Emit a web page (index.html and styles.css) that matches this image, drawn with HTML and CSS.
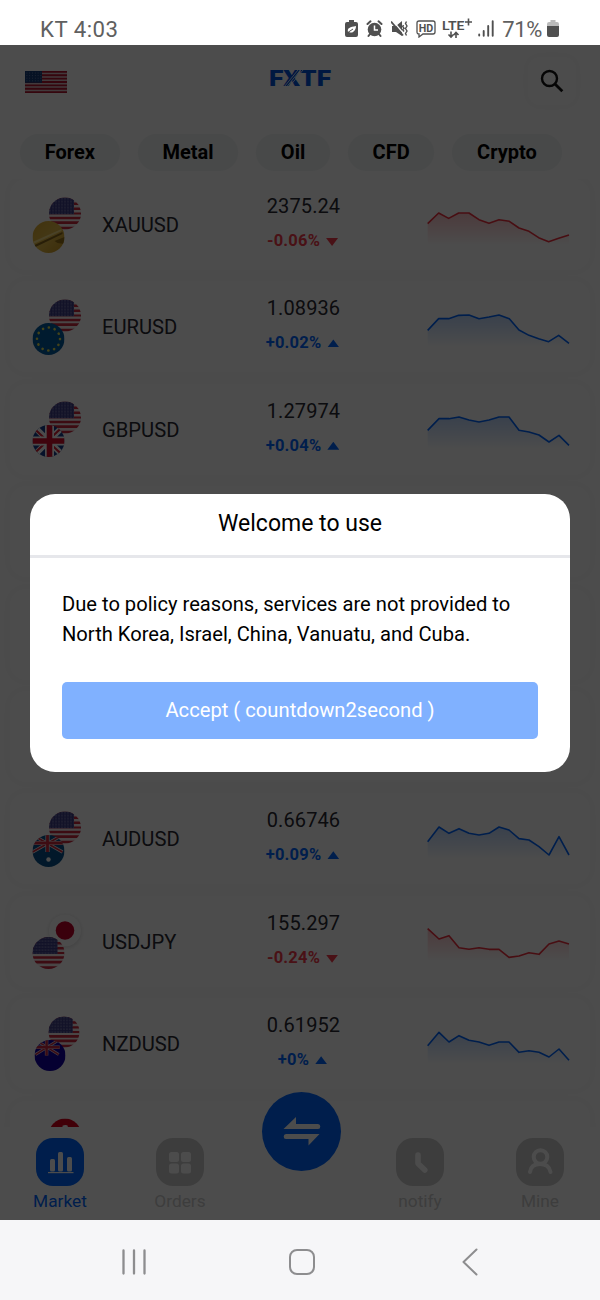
FILE: index.html
```html
<!DOCTYPE html>
<html lang="en">
<head>
<meta charset="utf-8">
<title>FXTF Market</title>
<link rel="stylesheet" href="styles.css">
</head>
<body>
<svg class="defs" width="0" height="0" aria-hidden="true">
  <defs>
    <clipPath id="disc"><circle cx="16" cy="16" r="16"/></clipPath>
    <pattern id="stars" width="3" height="3" patternUnits="userSpaceOnUse"><circle cx="1" cy="1" r=".6" fill="#cfd0e8"/></pattern>
    <linearGradient id="fade-red" x1="0" y1="0" x2="0" y2="1"><stop offset="0" stop-color="#f53b4b" stop-opacity=".3"/><stop offset="1" stop-color="#f53b4b" stop-opacity="0"/></linearGradient>
    <linearGradient id="fade-blue" x1="0" y1="0" x2="0" y2="1"><stop offset="0" stop-color="#0066ff" stop-opacity=".25"/><stop offset="1" stop-color="#0066ff" stop-opacity="0"/></linearGradient>
    <linearGradient id="gold-fill" x1="0" y1="0" x2="1" y2="1"><stop offset="0" stop-color="#d9a92f"/><stop offset=".5" stop-color="#e4bb48"/><stop offset="1" stop-color="#c9971f"/></linearGradient>
    <symbol id="us" viewBox="0 0 32 32"><g clip-path="url(#disc)"><path fill="#f4e9ec" d="M0 0h32v32H0z"/><path stroke="#c8283f" stroke-width="2.5" d="M0 1.2h32M0 6.2h32M0 11.2h32M0 16.2h32"/><path stroke="#c8283f" stroke-width="2.7" d="M0 20.500h32M0 25.2h32M0 30.6h32"/><path fill="#3f3f86" d="M0 0h25v17H0z"/><path fill="url(#stars)" d="M0 0h25v17H0z"/><path fill="#f4e9ec" d="M0 17h32v1.7H0z"/></g></symbol>
    <symbol id="gold" viewBox="0 0 32 32"><g clip-path="url(#disc)"><path fill="url(#gold-fill)" d="M0 0h32v32H0z"/><path fill="#86661b" d="M2 24 30 11v2L3 26z"/><path fill="#f6dc86" d="M0 21 29 8v2L1 23z"/><path fill="#98731a" d="m22 20 10-4v7l-7-1z"/></g></symbol>
    <symbol id="eu" viewBox="0 0 32 32"><circle cx="16" cy="16" r="16" fill="#005a9e"/><circle cx="16" cy="16" r="11.5" fill="none" stroke="#e3df55" stroke-width="2.6" stroke-linecap="round" stroke-dasharray=".1 5.92"/></symbol>
    <symbol id="gb" viewBox="0 0 32 32"><g clip-path="url(#disc)"><path fill="#173f8c" d="M0 0h32v32H0z"/><path stroke="#fff" stroke-width="6" d="m0 0 32 32M32 0 0 32"/><path stroke="#d91f35" stroke-width="2" d="m0 2 32 30M32 0 0 30"/><path stroke="#fff" stroke-width="9" d="M17 0v32M0 16h32"/><path stroke="#d40f2c" stroke-width="5.6" d="M17 0v32M0 16h32"/></g></symbol>
    <symbol id="au" viewBox="0 0 32 32"><g clip-path="url(#disc)"><path fill="#07528c" d="M0 0h32v32H0z"/><path stroke="#f2e7eb" stroke-width="3.200" d="m0 0 30 17M30 0 0 17"/><path stroke="#cb293c" stroke-width="1.7" d="m0 0 30 17M30 0 0 17"/><path stroke="#f2e7eb" stroke-width="4.200" d="M15 0v17M0 8h32"/><path stroke="#cb293c" stroke-width="2.8" d="M15 0v17M0 8h32"/><circle cx="16" cy="24.5" r="2.2" fill="#fff"/></g></symbol>
    <symbol id="nz" viewBox="0 0 32 32"><g clip-path="url(#disc)"><path fill="#1200a5" d="M0 0h32v32H0z"/><path stroke="#e0cfe1" stroke-width="3" d="m1 0 24 15M25 0 1 15"/><path stroke="#ca2943" stroke-width="1.5" d="m1 0 24 15M25 0 1 15"/><path stroke="#e0cfe1" stroke-width="3.600" d="M12.500 0v16M0 7.500h26"/><path stroke="#ca2943" stroke-width="2.500" d="M12.500 0v16M0 7.500h26"/></g></symbol>
    <symbol id="jp" viewBox="0 0 32 32"><circle cx="16" cy="16" r="16" fill="#fff"/><circle cx="16" cy="16" r="9.300" fill="#c4002b"/></symbol>
    <symbol id="hk" viewBox="0 0 32 32"><circle cx="16" cy="16" r="16" fill="#d9001b"/><path fill="#fff" d="M13 7.500q4-2 6 0l-2 4z"/></symbol>
  </defs>
</svg>

<div class="phone">
  <div class="status">
    <span class="carrier">KT 4:03</span>
    <div class="status-icons">
      <svg width="13" height="18" viewBox="0 0 13 18"><path fill="#505050" d="M4 0h5v2h2q2 0 2 2v11q0 2-2 2H2q-2 0-2-2V4q0-2 2-2h2z"/><path fill="#fff" d="M3 12c-1-4 2-5 8-6 0 4-3 8-7 6z"/><path stroke="#505050" stroke-width="1" fill="none" d="m2 13 6-4"/></svg>
      <svg width="17" height="18" viewBox="0 0 17 18"><circle cx="8.500" cy="9.500" r="6.800" fill="#505050"/><path stroke="#505050" stroke-width="2" stroke-linecap="round" d="m1.500 4 3-2.700M15.500 4l-3-2.700M4 14l-1.500 2M13 14l1.500 2"/><path fill="none" stroke="#fff" stroke-width="1.500" d="M8.500 5.500V10H12"/></svg>
      <svg width="17" height="18" viewBox="0 0 17 18"><path fill="#505050" d="M1 6h4l6-5v15l-6-4H1z"/><path stroke="#fff" stroke-width="1.200" d="m1.500.5 12 14"/><path stroke="#505050" stroke-width="1.800" d="m0 1.500 12 14"/><path fill="none" stroke="#505050" stroke-width="1.400" d="m12.500 5-.8 1.500L13 8.200l-1.300 1.600L13 11.500M15.500 1.500l-1 2L16 6l-1.500 2.500L16 11l-1.500 2.500 1 2"/></svg>
      <svg width="20" height="18" viewBox="0 0 20 18"><path fill="none" stroke="#505050" stroke-width="1.300" d="M3 1h14q2 0 2 2v9q0 2-2 2H7l-4 3v-3q-2 0-2-2V3q0-2 2-2z"/><text class="hd" x="10" y="11.500" text-anchor="middle" textLength="14.500" lengthAdjust="spacingAndGlyphs">HD</text></svg>
      <svg width="30" height="22" viewBox="0 0 30 22"><text class="lte" x="0" y="12" textLength="22.500" lengthAdjust="spacingAndGlyphs">LTE</text><path fill="none" stroke="#505050" stroke-width="1.600" d="M23 4h7M26.500 .5v7M9 13.500V19M6.500 16.500 9 19l2.500-2.500M14 20v-5.500M11.700 17l2.300-2.500 2.500 2.500"/></svg>
      <svg width="16" height="17" viewBox="0 0 16 17"><path stroke="#505050" stroke-width="1.900" stroke-linecap="round" d="M1.200 14.500v1M5.700 11v4.800M10.200 6v9.800M14.700 1.200v14.600"/></svg>
      <span class="percent">71%</span>
      <svg width="12" height="18" viewBox="0 0 12 18"><path fill="#bbb" d="M3.500 0h5v2H10q2 0 2 2v3H0V4q0-2 2-2h1.500z"/><path fill="#505050" d="M0 6h12v9q0 2-2 2H2q-2 0-2-2z"/></svg>
    </div>
  </div>

  <div class="app">
    <header class="top">
      <svg class="flag" width="42" height="22" viewBox="0 0 42 22"><path fill="#d9c4c9" d="M0 0h42v22H0z"/><path stroke="#b3142f" stroke-width="1.900" d="M0 .85h42M0 4.230h42M0 7.620h42M0 11h42M0 14.390h42M0 17.770h42M0 21.150h42"/><path fill="#173c78" d="M0 0h17v11.800H0z"/><path stroke="#8aa0c4" stroke-width=".8" stroke-dasharray=".8 2" d="M1.500 2h15M1.500 4.600h15M1.500 7.200h15M1.500 9.800h15"/></svg>
      <svg class="logo" width="66" height="28" viewBox="-2 -6 66 28"><text class="brand" x="-1" y="16.300" textLength="62" lengthAdjust="spacingAndGlyphs">FXTF</text><path stroke="#fff" stroke-width=".8" d="M30.500 0 17 16.500M28 0 14.500 16.500M33 0 19.500 16.500"/></svg>
      <span class="search"><svg width="24" height="24" viewBox="0 0 24 24" fill="none" stroke="#111" stroke-width="2.400"><circle cx="9.500" cy="9.500" r="7.500"/><path stroke-width="2.800" d="m15 15 7.300 7.300"/></svg></span>
    </header>
    <nav class="tabs"><span>Forex</span><span>Metal</span><span>Oil</span><span>CFD</span><span>Crypto</span></nav>

    <main class="list">
      <article class="row"><svg class="pair" viewBox="0 0 54 60"><use href="#us" x="19" y="2.500" width="32" height="32"/><use href="#gold" x="2.500" y="26" width="32" height="32"/></svg><span class="name">XAUUSD</span><div class="quote"><span class="price">2375.24</span><span class="change down">-0.06%</span></div>
        <svg class="chart" viewBox="381 225 432 180"><path fill="url(#fade-red)" d="M383 311 416 279 446 295 476 279 507 279 537 299 567 310 597 299 628 304 657 324 687 334 716 353 746 365 776 355 807 345V375H383z"/><polyline class="red" points="383,311 416,279 446,295 476,279 507,279 537,299 567,310 597,299 628,304 657,324 687,334 716,353 746,365 776,355 807,345"/></svg></article>
      <article class="row"><svg class="pair" viewBox="0 0 54 60"><use href="#us" x="19" y="2.500" width="32" height="32"/><use href="#eu" x="2.500" y="26" width="32" height="32"/></svg><span class="name">EURUSD</span><div class="quote"><span class="price">1.08936</span><span class="change up">+0.02%</span></div>
        <svg class="chart" viewBox="381 532 432 180"><path fill="url(#fade-blue)" d="M383 632 416 597 446 597 476 587 507 586 537 597 567 592 597 586 628 597 657 631 687 647 716 657 746 666 776 647 807 671V682H383z"/><polyline class="blue" points="383,632 416,597 446,597 476,587 507,586 537,597 567,592 597,586 628,597 657,631 687,647 716,657 746,666 776,647 807,671"/></svg></article>
      <article class="row"><svg class="pair" viewBox="0 0 54 60"><use href="#us" x="19" y="2.500" width="32" height="32"/><use href="#gb" x="2.500" y="26" width="32" height="32"/></svg><span class="name">GBPUSD</span><div class="quote"><span class="price">1.27974</span><span class="change up">+0.04%</span></div>
        <svg class="chart" viewBox="81 59 432 180"><path fill="url(#fade-blue)" d="M83 153 117 118 147 118 177 113 207 122 237 128 267 122 297 113 327 113 357 153 387 158 417 167 447 188 477 168 507 198V209H83z"/><polyline class="blue" points="83,153 117,118 147,118 177,113 207,122 237,128 267,122 297,113 327,113 357,153 387,158 417,167 447,188 477,168 507,198"/></svg></article>
      <article class="row"></article>
      <article class="row"></article>
      <article class="row"></article>
      <article class="row"><svg class="pair" viewBox="0 0 54 60"><use href="#us" x="19" y="2.500" width="32" height="32"/><use href="#au" x="2.500" y="26" width="32" height="32"/></svg><span class="name">AUDUSD</span><div class="quote"><span class="price">0.66746</span><span class="change up">+0.09%</span></div>
        <svg class="chart" viewBox="81 88 432 180"><path fill="url(#fade-blue)" d="M83 186 117 142 147 161 177 147 207 161 237 166 267 161 297 142 327 151 357 177 387 181 417 201 447 226 477 171 507 226V238H83z"/><polyline class="blue" points="83,186 117,142 147,161 177,147 207,161 237,166 267,161 297,142 327,151 357,177 387,181 417,201 447,226 477,171 507,226"/></svg></article>
      <article class="row"><svg class="pair" viewBox="0 0 54 60"><use class="lift" href="#jp" x="19" y="3.500" width="32" height="32"/><use href="#us" x="2.500" y="26" width="32" height="32"/></svg><span class="name">USDJPY</span><div class="quote"><span class="price">155.297</span><span class="change down">-0.24%</span></div>
        <svg class="chart" viewBox="81 395 432 180"><path fill="url(#fade-red)" d="M83 448 117 479 147 469 177 505 207 510 237 505 267 510 297 510 327 534 357 530 387 520 417 525 447 494 477 485 507 494V545H83z"/><polyline class="red" points="83,448 117,479 147,469 177,505 207,510 237,505 267,510 297,510 327,534 357,530 387,520 417,525 447,494 477,485 507,494"/></svg></article>
      <article class="row"><svg class="pair" viewBox="0 0 54 60"><use href="#us" x="18.500" y="2.500" width="31" height="31"/><use href="#nz" x="4.500" y="26" width="31" height="31"/></svg><span class="name">NZDUSD</span><div class="quote"><span class="price">0.61952</span><span class="change up">+0%</span></div>
        <svg class="chart" viewBox="81 702 432 180"><path fill="url(#fade-blue)" d="M83 797 117 757 147 786 177 767 207 781 237 786 267 796 297 786 327 786 357 817 387 812 417 817 447 831 477 807 507 841V852H83z"/><polyline class="blue" points="83,797 117,757 147,786 177,767 207,781 237,786 267,796 297,786 327,786 357,817 387,812 417,817 447,831 477,807 507,841"/></svg></article>
      <article class="row"><svg class="pair" viewBox="0 0 54 60"><use href="#hk" x="19" y="2.500" width="32" height="32"/></svg></article>
    </main>

    <nav class="bottom">
      <div class="item active"><span class="tile"><svg width="48" height="48" viewBox="0 0 48 48" fill="#fff"><rect x="14" y="21" width="5" height="12.500" rx="1.500"/><rect x="22" y="14" width="5" height="19.500" rx="1.500"/><rect x="31" y="19" width="5" height="14.500" rx="1.500"/><path d="M12 34h25.500v1.200H12z"/></svg></span>Market</div>
      <div class="item"><span class="tile"><svg width="48" height="48" viewBox="0 0 48 48" fill="#fff"><rect x="13" y="14" width="10" height="10" rx="2.500"/><rect x="25" y="14" width="10" height="10" rx="2.500"/><rect x="13" y="25.500" width="10" height="10" rx="2.500"/><rect x="25" y="25.500" width="10" height="10" rx="2.500"/></svg></span>Orders</div>
      <div class="trade"><svg width="79" height="79" viewBox="0 0 79 79"><g fill="#fff"><path d="M21.500 37 34 25v7h22q2.300 0 2.300 2.500T56 37z"/><path d="M57.500 42 46.500 53.500V47H24q-2.300 0-2.300-2.500T24 42z"/></g></svg></div>
      <div class="item"><span class="tile"><svg width="48" height="48" viewBox="0 0 48 48" fill="none" stroke="#fff" stroke-width="5.500" stroke-linecap="round" stroke-linejoin="round"><path d="M22 17v8.500l6.800 6.500"/></svg></span>notify</div>
      <div class="item"><span class="tile"><svg width="48" height="48" viewBox="0 0 48 48" fill="none" stroke="#fff" stroke-width="4" stroke-linecap="round"><circle cx="24.500" cy="19" r="6.800"/><path d="M14 34q1-8 10-8t10.500 8"/></svg></span>Mine</div>
    </nav>

    <div class="mask">
      <section class="dialog">
        <h1>Welcome to use</h1>
        <div class="body">
          <p>Due to policy reasons, services are not provided to North Korea, Israel, China, Vanuatu, and Cuba.</p>
          <button type="button">Accept ( countdown2second )</button>
        </div>
      </section>
    </div>
  </div>

  <div class="system">
    <svg width="26" height="26" viewBox="0 0 26 26" stroke="#8d8d8f" stroke-width="2.300" stroke-linecap="round"><path d="M2.500 1.500v23M13 1.500v23M23.500 1.500v23"/></svg>
    <svg width="26" height="26" viewBox="0 0 26 26" fill="none" stroke="#8d8d8f" stroke-width="2"><rect x="1" y="1" width="24" height="24" rx="7"/></svg>
    <svg width="16" height="28" viewBox="0 0 16 28" fill="none" stroke="#8d8d8f" stroke-width="2" stroke-linecap="round" stroke-linejoin="round"><path d="M14.500 1.500 1.500 14l13 12.500"/></svg>
  </div>
</div>
</body>
</html>
```

FILE: styles.css
```css
* { box-sizing: border-box; }
body { margin: 0; background: #fff; font-family: Roboto, "Liberation Sans", sans-serif; color: #111; }
svg { display: block; flex: none; }
.defs { position: absolute; }
.phone { width: 600px; height: 1300px; display: flex; flex-direction: column; overflow: hidden; }

.status { height: 45px; flex: none; display: flex; align-items: flex-start; justify-content: space-between; padding: 16px 41px 0 40px; color: #606060; background: #fff; }
.carrier { font-size: 22.200px; line-height: 27px; letter-spacing: .5px; }
.status-icons { display: flex; align-items: flex-start; gap: 8px; padding-top: 4px; }
.status-icons svg:nth-child(5) { margin-left: -2px; margin-top: -2px; }
.status-icons svg:nth-child(6) { margin-left: -2px; }
.percent { font-size: 22px; line-height: 27px; margin: -4px 0 0 0; letter-spacing: -.4px; }
.percent + svg { margin-left: -3px; }
.hd { font-size: 11px; font-weight: 700; fill: #505050; }
.lte { font-size: 13px; font-weight: 600; fill: #505050; }

.app { position: relative; height: 1175px; flex: none; display: flex; flex-direction: column; background: #fdfdfd; overflow: hidden; }
.top { height: 89px; flex: none; display: flex; justify-content: space-between; align-items: flex-start; padding: 12px 24px 0 25px; }
.flag { margin-top: 14px; }
.logo { margin: 7px 0 0 6px; }
.brand { font-size: 22px; font-weight: 900; fill: #0052d9; }
.search { width: 48px; height: 48px; display: grid; place-items: center; border-radius: 12px; background: #fff; box-shadow: 0 0 10px rgba(0, 0, 0, .025); }
.tabs { display: flex; gap: 17.800px; padding-left: 20px; flex: none; height: 45px; }
.tabs span { height: 37px; line-height: 37px; padding: 0 24.800px; border-radius: 19px; background: #f0f4f4; font-size: 20px; font-weight: 700; color: #000; }

.list { flex: 1; min-height: 0; overflow: hidden; padding: 0 10px; display: flex; flex-direction: column; gap: 11.400px; }
.row { height: 91px; flex: none; display: grid; grid-template-columns: 72px 141px 121px 143px; padding-left: 20px; align-items: center; border-radius: 16px; background: #fff; box-shadow: 0 0 12px rgba(0, 0, 0, .025); }
.pair { width: 54px; height: 60px; }
.lift { filter: drop-shadow(0 1px 2px rgba(0, 0, 0, .15)); }
.name { font-size: 20.200px; padding-top: 1px; color: #2a2a32; }
.quote { display: flex; flex-direction: column; align-items: center; gap: 10px; padding-bottom: 3px; }
.price { font-size: 20px; line-height: 26px; color: #2a2a32; letter-spacing: .1px; }
.change { display: flex; align-items: center; gap: 6px; padding-right: 2px; font-size: 16.500px; line-height: 24px; font-weight: 700; letter-spacing: .2px; }
.change::after { content: ""; width: 12px; height: 8px; background: currentColor; }
.up { color: #0066ff; }
.up::after { clip-path: polygon(50% 0, 100% 100%, 0 100%); }
.down { color: #f53b4b; }
.down::after { clip-path: polygon(0 0, 100% 0, 50% 100%); margin-top: 2px; }
.chart { width: 144px; height: 60px; margin-left: 63px; }
.chart polyline { fill: none; stroke-width: 4.800; stroke-linejoin: round; }
.red { stroke: #f0303f; }
.blue { stroke: #0066ff; }

.bottom { height: 93px; flex: none; display: grid; grid-template-columns: repeat(5, 120px); background: #fff; z-index: 1; }
.item { padding-top: 11px; display: flex; flex-direction: column; align-items: center; font-size: 17.300px; line-height: 26px; color: #cdcdcd; gap: 2px; }
.tile { width: 48px; height: 48px; border-radius: 17px; background: #cdcdcd; }
.active { color: #0066ff; }
.active .tile { background: #0066ff; }
.trade { width: 79px; height: 79px; border-radius: 50%; background: #0066ff; margin: -35px 0 0 22px; }

.mask { position: absolute; inset: 0; z-index: 2; background: rgba(0, 0, 0, .7); display: flex; justify-content: center; align-items: center; }
.dialog { width: 540px; height: 278px; border-radius: 25px; background: #fff; overflow: hidden; }
.dialog h1 { margin: 0; height: 64px; border-bottom: 3px solid #e6e7eb; text-align: center; font-size: 23px; font-weight: 400; line-height: 60px; color: #000; }
.body { padding: 31px 32px 0; }
.body p { margin: 0 0 31.600px; font-size: 20.150px; line-height: 30.700px; color: #000; }
.body button { display: block; width: 476px; height: 57px; border: 0; border-radius: 5px; background: #80b1ff; color: #fff; font: 400 20.200px Roboto, sans-serif; }

.system { flex: 1; background: #f6f6f8; display: flex; align-items: center; padding: 3px 0 0 121px; }
.system svg:nth-child(2) { margin-left: 142px; }
.system svg:nth-child(3) { margin-left: 147px; }
```
